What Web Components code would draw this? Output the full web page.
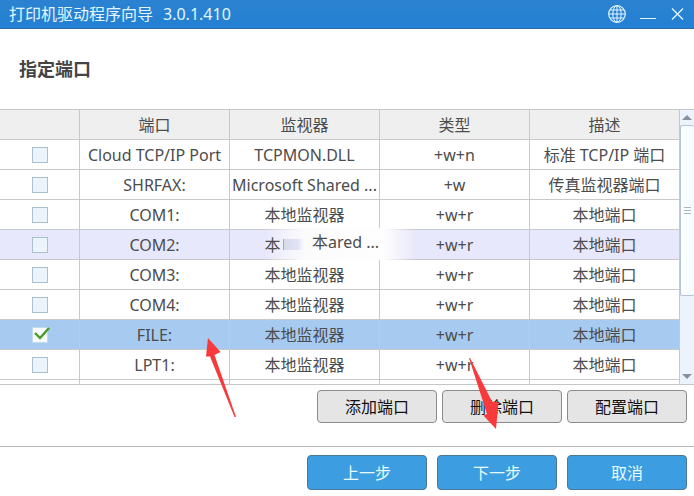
<!DOCTYPE html>
<html lang="zh-CN">
<head>
<meta charset="utf-8">
<title>打印机驱动程序向导</title>
<style>
  body {
    margin: 0;
    font: 16px/23px "Noto Sans", "Noto Sans CJK SC", sans-serif;
    color: #4c4c4c;
    background: #fff;
  }
</style>
</head>
<body>
<printer-wizard>
  <title-bar slot="title" version="3.0.1.410">打印机驱动程序向导</title-bar>
  <span slot="heading">指定端口</span>
  <port-table></port-table>
  <wizard-button slot="tools">添加端口</wizard-button>
  <wizard-button slot="tools">删除端口</wizard-button>
  <wizard-button slot="tools">配置端口</wizard-button>
  <wizard-button slot="steps" primary>上一步</wizard-button>
  <wizard-button slot="steps" primary>下一步</wizard-button>
  <wizard-button slot="steps" primary>取消</wizard-button>
</printer-wizard>
<hint-arrows></hint-arrows>

<script>
class PrinterWizard extends HTMLElement {
    constructor() {
        super();

        this._root = this.attachShadow({ mode: 'open' });
        this._root.innerHTML = `
        <style>
          :host {
            display: flex;
            flex-direction: column;
            height: 100vh;
            overflow: hidden;
          }
          h1 {
            margin: 0;
            padding: 28px 19px;
            font-size: 18px;
            line-height: 24px;
            color: #444;
          }
          main {
            flex: 1;
            min-height: 0;
            display: flex;
            flex-direction: column;
          }
          .tools, .steps {
            display: flex;
            justify-content: flex-end;
          }
          .tools {
            gap: 5px;
            padding: 5px 7px 23px;
            border-bottom: 1px solid #b9b9b9;
          }
          .steps {
            gap: 10px;
            padding: 8px 7px 6px;
          }
        </style>
        <slot name="title"></slot>
        <h1><slot name="heading"></slot></h1>
        <main><slot></slot></main>
        <div class="tools"><slot name="tools"></slot></div>
        <div class="steps"><slot name="steps"></slot></div>`;
    }
}

class TitleBar extends HTMLElement {
    constructor() {
        super();

        const version = this.getAttribute('version') ?? '';

        this._root = this.attachShadow({ mode: 'open' });
        this._root.innerHTML = `
        <style>
          :host {
            display: flex;
            align-items: center;
            justify-content: space-between;
            box-sizing: border-box;
            height: 29px;
            padding: 0 10px 0 9px;
            color: #e2f6ff;
            background: linear-gradient(#2b82d0, #2380d3);
            border-bottom: 1px solid #2a6ca8;
          }
          .caption, .controls {
            display: flex;
            gap: 10px;
          }
          .controls {
            gap: 13px;
          }
          button {
            display: flex;
            padding: 0;
            border: 0;
            color: inherit;
            background: none;
          }
          svg {
            fill: none;
            stroke: currentColor;
          }
        </style>
        <div class="caption"><slot></slot><span>${version}</span></div>
        <div class="controls">
          <button aria-label="语言">
            <svg width="18" height="18" viewBox="0 0 18 18">
              <circle cx="9" cy="9" r="8.3" stroke-width="1.2"/>
              <ellipse cx="9" cy="9" rx="4.2" ry="8.3"/>
              <path d="M9 .7v16.6M.7 9h16.6M2 5h14M2 13h14"/>
            </svg>
          </button>
          <button aria-label="最小化">
            <svg width="18" height="18" viewBox="0 0 18 18"><path d="M1 13.5h16"/></svg>
          </button>
          <button aria-label="关闭">
            <svg width="14" height="18" viewBox="0 0 14 18"><path stroke-width="1.4" d="M2 3.5l11 11M13 3.5l-11 11"/></svg>
          </button>
        </div>`;
    }
}

class WizardButton extends HTMLElement {
    constructor() {
        super();

        this._root = this.attachShadow({ mode: 'open' });
        this._root.innerHTML = `
        <style>
          :host {
            display: block;
            width: 120px;
          }
          button {
            display: block;
            width: 100%;
            padding: 5px 0 3px;
            border: 1px solid #8c8c8c;
            border-radius: 4px;
            font: inherit;
            color: #111;
            background: #e5e5e5;
          }
          :host([primary]) button {
            padding: 6px 0 4px;
            border-color: #4a7898;
            color: #e8fbff;
            background: #3c9ee1;
          }
        </style>
        <button type="button"><slot></slot></button>`;
    }
}

class ListScroll extends HTMLElement {
    constructor() {
        super();

        this._root = this.attachShadow({ mode: 'open' });
        this._root.innerHTML = `
        <style>
          :host {
            display: flex;
            flex-direction: column;
            width: 14px;
            background: #edf3fc;
          }
          button {
            height: 15px;
            padding: 0;
            border: 0;
            background: none;
          }
          svg {
            display: block;
            margin: auto;
            fill: #8a919d;
          }
          .track {
            flex: 1;
          }
          .thumb {
            display: flex;
            flex-direction: column;
            align-items: center;
            justify-content: center;
            gap: 2px;
            box-sizing: border-box;
            height: 70%;
            border: 1px solid #b4c5d9;
            border-right: 0;
            border-radius: 2px;
            background: linear-gradient(90deg, #fff, #f3faff);
          }
          i {
            width: 7px;
            height: 1px;
            background: #a4b9c9;
          }
        </style>
        <button aria-label="向上滚动"><svg width="10" height="5"><path d="M0 5l5-5 5 5z"/></svg></button>
        <div class="track"><div class="thumb"><i></i><i></i><i></i></div></div>
        <button aria-label="向下滚动"><svg width="10" height="5"><path d="M0 0h10l-5 5z"/></svg></button>`;
    }
}

const PORTS = [
    ['Cloud TCP/IP Port', 'TCPMON.DLL', '+w+n', '标准 TCP/IP 端口'],
    ['SHRFAX:', 'Microsoft Shared ...', '+w', '传真监视器端口'],
    ['COM1:', '本地监视器', '+w+r', '本地端口'],
    ['COM2:', '本', '+w+r', '本地端口', 'hover'],
    ['COM3:', '本地监视器', '+w+r', '本地端口'],
    ['COM4:', '本地监视器', '+w+r', '本地端口'],
    ['FILE:', '本地监视器', '+w+r', '本地端口', 'selected'],
    ['LPT1:', '本地监视器', '+w+r', '本地端口'],
    ['', '', '', '']
];

class PortTable extends HTMLElement {
    constructor() {
        super();

        this._root = this.attachShadow({ mode: 'open' });
        this._root.innerHTML = `
        <style>
          :host {
            flex: 1;
            min-height: 0;
            display: flex;
            overflow: hidden;
            border: solid #c6c6c6;
            border-width: 1px 0;
          }
          .list {
            flex: 1;
            overflow: hidden;
          }
          table {
            width: 100%;
            table-layout: fixed;
            border-collapse: separate;
            border-spacing: 0;
            line-height: 24px;
          }
          .pick {
            width: 80px;
          }
          th, td {
            box-sizing: border-box;
            height: 30px;
            padding: 0;
            border: solid #c9c9c9;
            border-width: 0 1px 1px 0;
            font-weight: normal;
            text-align: center;
            white-space: nowrap;
          }
          th {
            background: #efefef;
          }
          .hover td {
            position: relative;
            background: #e8e8fc;
          }
          .selected td {
            background: #a7caf0;
          }
          input {
            appearance: none;
            display: block;
            width: 16px;
            height: 16px;
            box-sizing: border-box;
            margin: 0 auto;
            border: 1px solid #a9bfd2;
            background: #ecf4fb;
          }
          input:checked {
            border-color: #c3d8ea;
            background: #f6fbfa;
          }
          .check {
            display: block;
            position: relative;
          }
          .check svg {
            position: absolute;
            left: 50%;
            top: 0;
            margin-left: -6px;
            fill: none;
            stroke: #479c28;
            stroke-width: 2.4;
          }
          .clipped {
            position: relative;
            z-index: 2;
            display: inline-block;
            width: 5em;
            text-align: left;
          }
          .tip {
            position: absolute;
            left: 35px;
            top: -2px;
            z-index: 1;
            display: flex;
            align-items: center;
            width: 150px;
            height: 32px;
            box-sizing: border-box;
            padding: 0 0 4px 18px;
            background: linear-gradient(90deg, #fff0, #fbfbfc 38px, #fefefe 118px, #fff0);
          }
          .tip::before {
            content: "";
            width: 20px;
            height: 11px;
            margin: 4px 8px 0 0;
            border-left: 1px solid #a9a9b8;
            background: linear-gradient(90deg, #d9d9ec, #e3e3f6 70%, #fbfbfc);
          }
        </style>
        <div class="list">
          <table>
            <colgroup><col class="pick"><col><col><col><col></colgroup>
            <thead>
              <tr><th></th><th>端口</th><th>监视器</th><th>类型</th><th>描述</th></tr>
            </thead>
            <tbody>${PORTS.map(port => this.renderRow(port)).join('')}</tbody>
          </table>
        </div>
        <list-scroll></list-scroll>`;
    }

    renderRow([name, monitor, type, description, state = '']) {
        const selected = state === 'selected';
        const box = name && `
          <label class="check">
            <input type="checkbox" aria-label="${name}" ${selected ? 'checked' : ''}>
            ${selected ? '<svg width="16" height="14"><path d="M1 6l5 5L15 1"/></svg>' : ''}
          </label>`;

        // The hovered row shows the drag tip over its monitor name
        const monitorCell = state === 'hover'
            ? `<span class="clipped">${monitor}</span><span class="tip">本ared ...</span>`
            : monitor;

        return `
          <tr class="${state}">
            <td>${box}</td><td>${name}</td><td>${monitorCell}</td><td>${type}</td><td>${description}</td>
          </tr>`;
    }
}

// Red pointers laid over the window: one to the FILE: row, one to the next step
class HintArrows extends HTMLElement {
    constructor() {
        super();

        this._root = this.attachShadow({ mode: 'open' });
        this._root.innerHTML = `
        <style>
          :host {
            position: absolute;
            left: 0;
            top: 0;
            z-index: 2;
            pointer-events: none;
          }
          svg {
            display: block;
            fill: #f93a3d;
          }
        </style>
        <svg width="510" height="440">
          <path d="M208 338L220.500 352L214.500 355L236 417L234.500 417L210 356.500L206 356.500z"/>
          <path d="M469 358L470 358L492 401.500L498.500 402L496 429L483.500 415.500L487 414z"/>
        </svg>`;
    }
}

window.customElements.define('printer-wizard', PrinterWizard);
window.customElements.define('title-bar', TitleBar);
window.customElements.define('wizard-button', WizardButton);
window.customElements.define('list-scroll', ListScroll);
window.customElements.define('port-table', PortTable);
window.customElements.define('hint-arrows', HintArrows);
</script>
</body>
</html>
